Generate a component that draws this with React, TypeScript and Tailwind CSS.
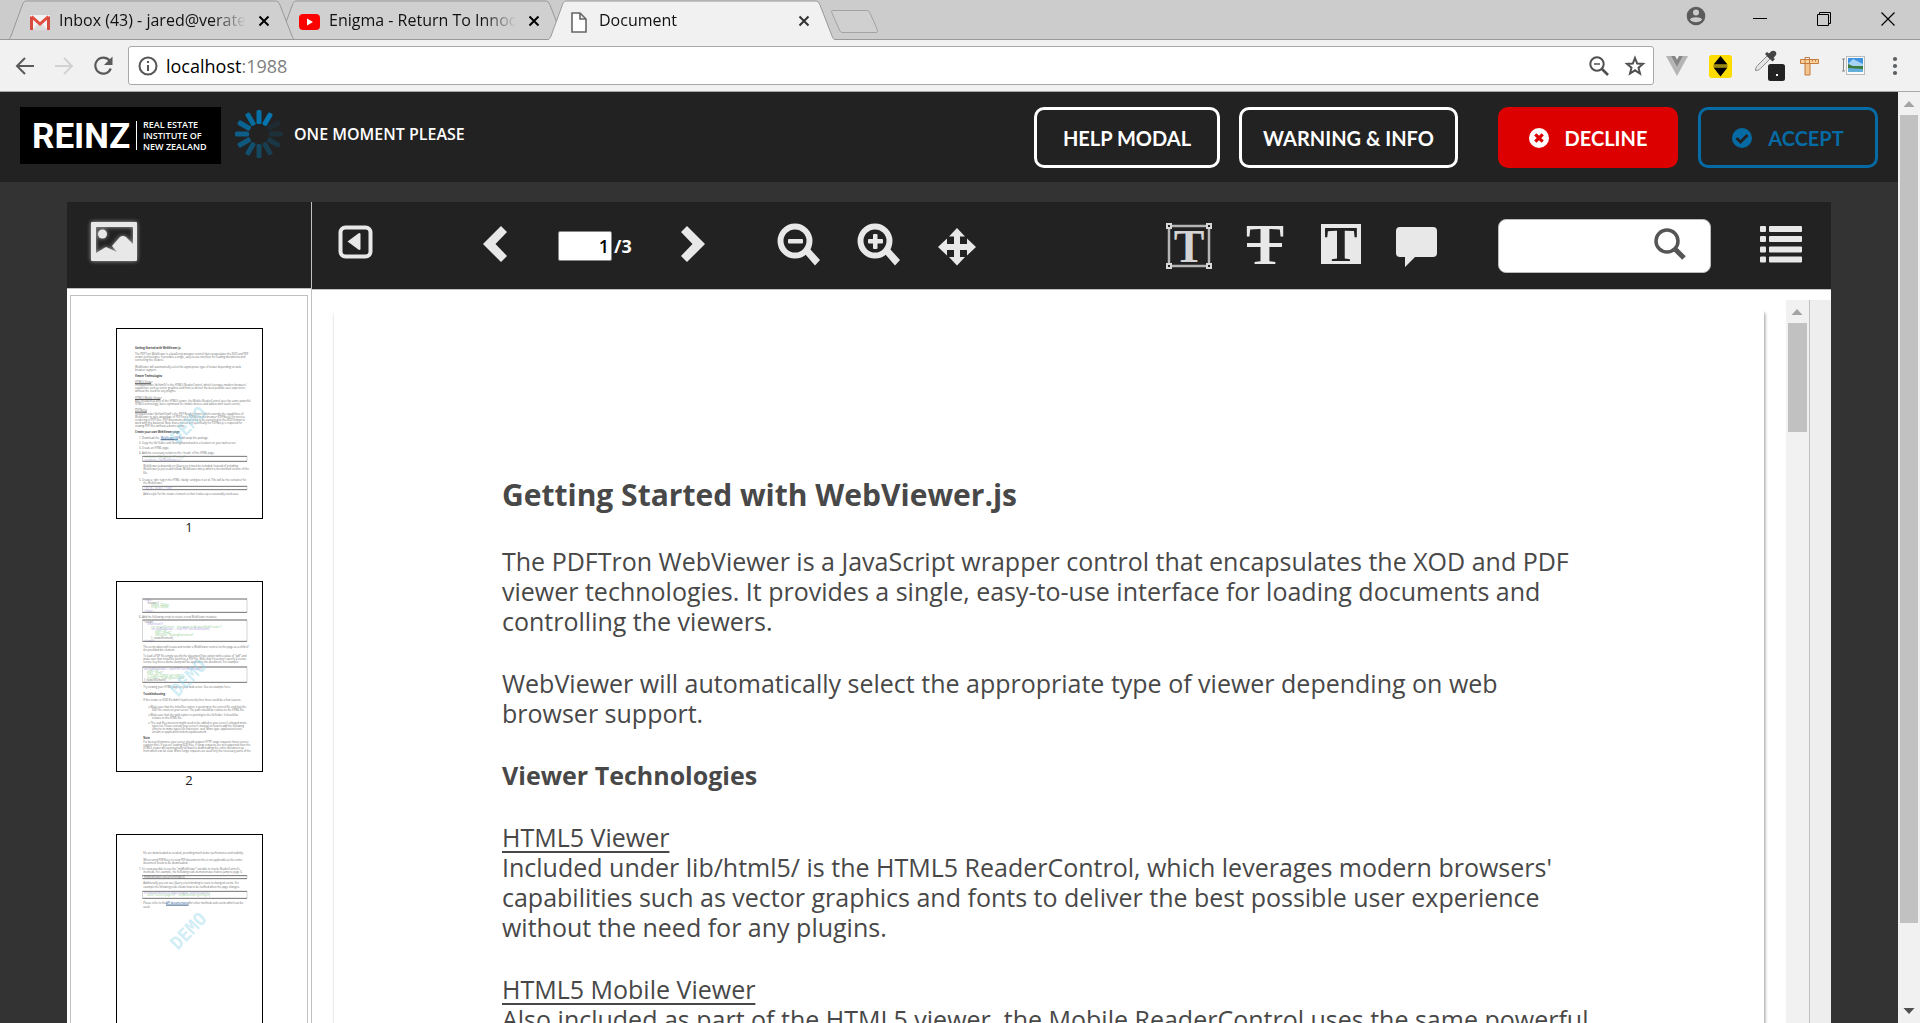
import React from "react";

function TabShape({ active }: { active?: boolean }) {
  return (
    <svg className="absolute inset-0" width="287" height="40" viewBox="0 0 287 40" aria-hidden="true">
      <path
        d="M0.5 39.5 C2 38.5 2 38 3 36 L14 6 C15.5 2 16 1 19 1 L267 1 C270 1 270.500 2 272 5 L284 36 C285 38 285 39 286.500 39.500 Z"
        fill={active ? "#f1f1f1" : "#d0d0d0"}
        stroke="#999"
        strokeWidth="1"
      />
      {active ? <rect x="1" y="39" width="285" height="1" fill="#f1f1f1" /> : <rect x="0" y="39" width="287" height="1" fill="#999" />}
    </svg>
  );
}

function GmailIcon() {
  return (
    <svg width="22" height="18" viewBox="0 0 22 18" aria-hidden="true">
      <rect x="1" y="2" width="20" height="15" rx="1" fill="#f2f2f2" />
      <path d="M3 17 L11 9 L19 17 Z" fill="#dcdcdc" />
      <path d="M1 17 V3 L4 5.500 V17 Z M21 17 V3 L18 5.500 V17 Z" fill="#d54b3d" />
      <path d="M2.500 3.500 L11 11 L19.500 3.500" fill="none" stroke="#e04a3f" strokeWidth="3" />
    </svg>
  );
}

function YoutubeIcon() {
  return (
    <svg width="22" height="18" viewBox="0 0 22 18" aria-hidden="true">
      <rect x="0" y="1" width="21" height="16" rx="4" fill="#f00" />
      <path d="M8 5.500 L14 9 L8 12.500 Z" fill="#fff" />
    </svg>
  );
}

function FileIcon() {
  return (
    <svg width="22" height="22" viewBox="0 0 22 22" aria-hidden="true">
      <path d="M3 2 H11 L17 8 V21 H3 Z M11 2 V8 H17" fill="#fff" stroke="#666" strokeWidth="1.600" />
    </svg>
  );
}

function Tab({ title, icon, active }: { title: string; icon: React.ReactNode; active?: boolean }) {
  return (
    <div className={active ? "relative z-20 -ml-4 h-10 w-[286px] shrink-0" : "relative z-10 -ml-4 h-10 w-[286px] shrink-0 first:z-[11] first:ml-0"}>
      <TabShape active={active} />
      <div className="relative flex h-full items-center pr-[22px] pl-[21px]">
        <button className="flex min-w-0 flex-1 items-center gap-2 text-left">
          <span className="flex w-[22px] shrink-0 justify-center pt-1">{icon}</span>
          <span className="min-w-0 flex-1 overflow-hidden text-[16px] leading-6 whitespace-nowrap text-[#111] [mask-image:linear-gradient(to_right,black_82%,transparent)]">
            {title}
          </span>
        </button>
        <button aria-label={"Close " + title} className="ml-2.5 flex size-4 items-center justify-center pt-0.5">
          <svg width="12" height="12" viewBox="0 0 12 12" aria-hidden="true">
            <path d="M1.500 1.500 L10.500 10.500 M10.500 1.500 L1.500 10.500" stroke={active ? "#333" : "#000"} strokeWidth="2" />
          </svg>
        </button>
      </div>
    </div>
  );
}

function TabStrip() {
  return (
    <div className="relative flex h-10 shrink-0 bg-[#ccc] pl-2">
      <div className="absolute inset-x-0 bottom-0 h-px bg-[#999]" />
      <div className="relative flex">
        <Tab title="Inbox (43) - jared@veratech.co.nz" icon={<GmailIcon />} />
        <Tab title="Enigma - Return To Innocence" icon={<YoutubeIcon />} />
        <Tab title="Document" icon={<FileIcon />} active />
      </div>
      <button aria-label="New tab" className="-ml-1 flex pt-[9px]">
        <svg width="50" height="25" viewBox="0 0 50 25" aria-hidden="true">
          <path d="M3 1.500 H36 C38 1.500 39 2 40 4 L47 20 C48 22.500 47.500 23.500 46 23.500 H13 C11 23.500 10.500 23 9.500 21 L2 4 C1 2 1.500 1.500 3 1.500 Z" fill="#d0d0d0" stroke="#a3a3a3" />
        </svg>
      </button>
      <div className="relative ml-auto flex items-start">
        <button aria-label="Profile" className="mr-[46px] pt-1.5">
          <svg width="20" height="20" viewBox="0 0 20 20" aria-hidden="true">
            <circle cx="10" cy="10" r="9.300" fill="#5c5c5c" />
            <circle cx="10" cy="6.500" r="3" fill="#ccc" />
            <path d="M4 13.500 C5 10.500 15 10.500 16 13.500 C14 17 6 17 4 13.500 Z" fill="#ccc" />
          </svg>
        </button>
        <button aria-label="Minimize" className="pt-[11px]">
          <svg width="16" height="16" viewBox="0 0 16 16" aria-hidden="true"><path d="M1 7.500 H15" stroke="#000" /></svg>
        </button>
        <button aria-label="Restore" className="ml-12 pt-[11px]">
          <svg width="16" height="16" viewBox="0 0 16 16" aria-hidden="true"><path d="M1.500 3.500 H12.500 V14.500 H1.500 Z M3.500 3.500 V1.500 H14.500 V12.500 H12.500" fill="none" stroke="#000" /></svg>
        </button>
        <button aria-label="Close window" className="mr-6 ml-12 pt-[11px]">
          <svg width="16" height="16" viewBox="0 0 16 16" aria-hidden="true"><path d="M1.500 1.500 L14.500 14.500 M14.500 1.500 L1.500 14.500" stroke="#000" strokeWidth="1.200" /></svg>
        </button>
      </div>
    </div>
  );
}

function AddressBar() {
  return (
    <div className="flex h-[52px] shrink-0 items-center border-b border-[#a9a9a9] bg-[#f1f1f1] pr-[14px] pl-[14px]">
      <button aria-label="Back" className="mr-[17px]">
        <svg width="22" height="22" viewBox="0 0 22 22" fill="none" stroke="#5a5a5a" strokeWidth="2" aria-hidden="true"><path d="M20 11 H3 M11 3 L3 11 L11 19" /></svg>
      </button>
      <button aria-label="Forward" className="mr-[17px]">
        <svg width="22" height="22" viewBox="0 0 22 22" fill="none" stroke="#d2d2d2" strokeWidth="2" aria-hidden="true"><path d="M2 11 H19 M11 3 L19 11 L11 19" /></svg>
      </button>
      <button aria-label="Reload" className="mr-[14px]">
        <svg width="22" height="22" viewBox="0 0 22 22" aria-hidden="true">
          <path d="M17.500 5.500 A8 8 0 1 0 18.800 13.500" fill="none" stroke="#5a5a5a" strokeWidth="2.200" />
          <path d="M20.500 1.500 V10 H12 Z" fill="#5a5a5a" />
        </svg>
      </button>
      <div className="flex h-[39px] min-w-0 flex-1 items-center rounded-[3px] border border-[#a8a8a8] bg-white pr-[7px] pl-[9px]">
        <svg width="20" height="20" viewBox="0 0 20 20" className="shrink-0" aria-hidden="true">
          <circle cx="10" cy="10" r="8.500" fill="none" stroke="#555" strokeWidth="2" />
          <path d="M10 9 V15 M10 5 V7" stroke="#555" strokeWidth="2" />
        </svg>
        <div className="ml-2 flex-1 text-[18px] leading-6 text-black">
          localhost<span className="text-[#808080]">:1988</span>
        </div>
        <button aria-label="Zoom" className="mr-[14px]">
          <svg width="22" height="22" viewBox="0 0 22 22" fill="none" stroke="#505050" strokeWidth="2" aria-hidden="true">
            <circle cx="9" cy="9" r="6.700" /><path d="M14 14 L20 20" strokeWidth="2.600" /><path d="M6 9 H12" strokeWidth="1.500" />
          </svg>
        </button>
        <button aria-label="Bookmark this page">
          <svg width="22" height="22" viewBox="0 0 22 22" fill="none" stroke="#505050" strokeWidth="2" aria-hidden="true">
            <path d="M11 3 L13.200 8.500 L19 8.900 L14.500 12.700 L16 18.500 L11 15.300 L6 18.500 L7.500 12.700 L3 8.900 L8.800 8.500 Z" />
          </svg>
        </button>
      </div>
      <div className="flex items-center">
        <button aria-label="Vue devtools" className="ml-[11px]">
          <svg width="24" height="24" viewBox="0 0 24 24" aria-hidden="true">
            <path d="M1 2 H6 L12 13 L18 2 H23 L12 22 Z" fill="#b5b5b5" /><path d="M6 2 H10 L12 5.500 L14 2 H18 L12 13 Z" fill="#868686" />
          </svg>
        </button>
        <button aria-label="Page ruler extension" className="ml-[19px]">
          <svg width="24" height="24" viewBox="0 0 24 24" aria-hidden="true">
            <rect x="1" y="1" width="23" height="23" rx="3" fill="#ffdc00" /><path d="M12.500 2 L19.500 10.500 H5.500 Z M5.500 13.500 H19.500 L12.500 22.500 Z" fill="#000" /><path d="M5.500 12 H19.500" stroke="#333" strokeWidth="1" />
          </svg>
        </button>
        <button aria-label="Eye dropper" className="ml-[22px]">
          <svg width="32" height="32" viewBox="0 0 32 32" aria-hidden="true">
            <path d="M1.500 20.500 C1.500 17 3 16 5 14 L13 6 L16 9 L8 17 C6 19 5 20.500 1.500 20.500 Z" fill="#e4e4e4" stroke="#8c8c8c" />
            <path d="M11 4 L13 2 L15 3.500 L17 1.500 C20 -0.500 23.500 2 22 5 L19.500 8 L21 9 L18.500 11.500 Z" fill="#444" />
            <rect x="14" y="14" width="17" height="17" rx="2.500" fill="#222" /><rect x="22" y="24" width="2" height="2" fill="#fff" />
          </svg>
        </button>
        <button aria-label="Measure" className="ml-[13px]">
          <svg width="22" height="22" viewBox="0 0 22 22" aria-hidden="true">
            <path d="M6 6 H11 V20 H6 Z" fill="#f5c48d" stroke="#c27b41" /><path d="M1.500 4.500 H19.500 V8.500 H1.500 Z" fill="#f9cf9a" stroke="#c27b41" />
            <path d="M6 2.500 V8.500 M10.500 2.500 V8.500 M13.500 4.500 V6.500 M16.500 4.500 V6.500 M6 2.500 H10.500" stroke="#c27b41" fill="none" />
          </svg>
        </button>
        <button aria-label="Image size" className="ml-5">
          <svg width="24" height="22" viewBox="0 0 24 22" aria-hidden="true">
            <path d="M1 4 H4 M1 16 H4 M2.500 4 V16" stroke="#888" fill="none" />
            <rect x="5.500" y="1.500" width="18" height="18" fill="#fafafa" stroke="#bbb" />
            <rect x="7" y="3" width="15" height="14" fill="#3e92de" /><path d="M7 9 L12 4 L22 9 V12 H7 Z" fill="#a4d3f5" /><path d="M7 9 L12 11 L22 11 V14 H7 Z" fill="#3e7a3e" /><path d="M7 13 L22 14 V17 H7 Z" fill="#63aedb" />
          </svg>
        </button>
        <button aria-label="Menu" className="ml-[19px]">
          <svg width="22" height="22" viewBox="0 0 22 22" fill="#5a5f63" aria-hidden="true"><circle cx="11" cy="4" r="2.100" /><circle cx="11" cy="11" r="2.100" /><circle cx="11" cy="18" r="2.100" /></svg>
        </button>
      </div>
    </div>
  );
}

function Logo() {
  return (
    <svg width="201" height="57" viewBox="0 0 201 57" role="img" aria-label="REINZ Real Estate Institute of New Zealand">
      <rect width="201" height="57" fill="#000" />
      <text x="12" y="41" fill="#fff" fontSize="35" fontWeight="700" fontFamily="'Liberation Sans Narrow', Roboto, sans-serif">REINZ</text>
      <rect x="116" y="14" width="1" height="29" fill="#fff" />
      <g fill="#fff" fontSize="9" fontWeight="600" fontFamily="'Open Sans', 'Noto Sans', sans-serif">
        <text x="123" y="21">REAL ESTATE</text>
        <text x="123" y="32">INSTITUTE OF</text>
        <text x="123" y="43">NEW ZEALAND</text>
      </g>
    </svg>
  );
}

const spokes = [1, 0.95, 0.88, 0.8, 0.72, 0.64, 0.54, 0.44, 0.34, 0.25, 0.17, 0.12];

function Spinner() {
  return (
    <svg width="50" height="50" viewBox="-25 -25 50 50" aria-hidden="true">
      {spokes.map((o, i) => (
        <rect key={i} x="-2.500" y="-24" width="5" height="14" rx="1.500" fill="#0576b0" opacity={o} transform={`rotate(${30 - i * 30})`} />
      ))}
    </svg>
  );
}

const headerButton = "flex h-[61px] items-center justify-center rounded-[10px] border-[3px] font-['Lato',sans-serif] text-[20px] leading-6 font-bold whitespace-nowrap";

function Header() {
  return (
    <header className="flex h-[90px] shrink-0 items-start bg-[#222] px-5 pt-[15px]">
      <Logo />
      <div className="ml-[13px] flex items-center pt-0.5">
        <Spinner />
        <span className="ml-[10px] text-[16px] leading-5 font-semibold text-white">ONE MOMENT PLEASE</span>
      </div>
      <div className="ml-auto flex">
        <button className={headerButton + " w-[186px] border-white text-white"}>HELP MODAL</button>
        <button className={headerButton + " ml-[19px] w-[219px] border-white text-white"}>WARNING &amp; INFO</button>
        <button className={headerButton + " ml-10 w-[180px] gap-4 border-[#dd0000] bg-[#dd0000] text-white"}>
          <svg width="20" height="20" viewBox="0 0 20 20" aria-hidden="true"><circle cx="10" cy="10" r="10" fill="#fff" /><path d="M6.300 6.300 L13.700 13.700 M13.700 6.300 L6.300 13.700" stroke="#dd0000" strokeWidth="3.200" /></svg>
          DECLINE
        </button>
        <button className={headerButton + " ml-5 w-[180px] gap-4 border-[#066ba4] text-[#066ba4]"}>
          <svg width="20" height="20" viewBox="0 0 20 20" aria-hidden="true"><circle cx="10" cy="10" r="10" fill="#066ba4" /><path d="M4.500 10 L8.500 14 L15.500 7" fill="none" stroke="#222" strokeWidth="3" /></svg>
          ACCEPT
        </button>
      </div>
    </header>
  );
}

type Line = [number, number, string, string?];

function Thumb({ lines, boxes, label }: { lines: Line[]; boxes: [number, number][]; label: string }) {
  return (
    <li className="mb-[46px] flex flex-col items-center">
      <button aria-label={"Go to page " + label} className="border border-black bg-white">
        <svg width="145" height="189" viewBox="3 3 435 567" className="block" aria-hidden="true">
          <g fontFamily="'Open Sans', 'Noto Sans', sans-serif" fontSize="8" fill="#666">
            {lines.map(([x, y, text, kind], i) => (
              <text
                key={i}
                x={x}
                y={y}
                fontWeight={kind === "b" ? 700 : 400}
                fill={kind === "g" ? "#8fcf8f" : kind === "p" ? "#a795dd" : kind === "l" ? "#0b4a8f" : kind === "b" ? "#444" : undefined}
              >
                {text}
              </text>
            ))}
            {lines.map(([x, y, text, kind], i) =>
              kind === "u" || kind === "l" ? <rect key={i} x={x} y={y + 1} width={text.length * 4} height="2.500" fill={kind === "l" ? "#0b3a6f" : "#333"} /> : null,
            )}
          </g>
          {boxes.map(([y, h], i) => (
            <g key={i}>
              <rect x="80" y={y} width="313" height={h} fill="none" stroke="#aaa" strokeWidth="1.500" />
              <path d={`M80 ${y} h313 M80 ${y + h} h313`} stroke="#666" strokeWidth="2.500" />
            </g>
          ))}
          <text x="217" y="290" transform="rotate(-46 217 290)" textAnchor="middle" dominantBaseline="central" fontFamily="'DejaVu Sans Mono', monospace" fontWeight="700" fontSize="54" fill="#8fd3e8" opacity="0.400">
            DEMO
          </text>
        </svg>
      </button>
      <span className="pt-px text-[13px] leading-[15px] text-[#222]">{label}</span>
    </li>
  );
}

const page1: Line[] = [
  [57, 62, "Getting Started with WebViewer.js", "b"],
  [57, 82, "The PDFTron WebViewer is a JavaScript wrapper control that encapsulates the XOD and PDF"],
  [57, 91, "viewer technologies. It provides a single, easy-to-use interface for loading documents and"],
  [57, 100, "controlling the viewers."],
  [57, 119, "WebViewer will automatically select the appropriate type of viewer depending on web"],
  [57, 128, "browser support."],
  [57, 147, "Viewer Technologies", "b"],
  [57, 165, "HTML5 Viewer", "u"],
  [57, 175, "Included under lib/html5/ is the HTML5 ReaderControl, which leverages modern browsers'"],
  [57, 184, "capabilities such as vector graphics and fonts to deliver the best possible user experience"],
  [57, 193, "without the need for any plugins."],
  [57, 212, "HTML5 Mobile Viewer", "u"],
  [57, 222, "Also included as part of the HTML5 viewer, the Mobile ReaderControl uses the same powerful"],
  [57, 231, "HTML5 technology, but is optimized for mobile devices and tablets with touch events."],
  [57, 250, "PDFNet.js", "u"],
  [57, 260, "Included under lib/html5/pdf is the PDF ReaderControl which extends the capabilities of"],
  [57, 269, "WebViewer to take advantage of PDFTron's PDFNet in the browser (PDFNet.js) for precise"],
  [57, 278, "rendering of PDF files. PDF documents do not need to be converted to the XOD format to"],
  [57, 287, "work with this backend. Note that a license key specifically for PDFNet.js is required for"],
  [57, 296, "viewing PDF files without a demo stamp."],
  [57, 315, "Create your own WebViewer page", "b"],
  [69, 333, "1.  Download the"],
  [134, 333, "WebViewer SDK", "l"],
  [192, 333, "and unzip the package."],
  [69, 348, "2.  Copy the lib/ folder and GettingStarted.xod to a location on your web server."],
  [69, 362, "3.  Create an HTML page."],
  [69, 377, "4.  Add the necessary scripts to the <head> of the HTML page."],
  [84, 391, "<script src=\"lib/jquery-1.7.min.js\">", "g"],
  [84, 398, "<script src=\"lib/WebViewer.js\">", "p"],
  [82, 418, "WebViewer.js depends on jQuery so it must be included. Instead of including"],
  [82, 427, "WebViewer.js you could include WebViewer.min.js which is the minified version of the"],
  [82, 437, "file."],
  [69, 458, "5.  Create a <div> tag in the HTML <body> and give it an id. This will be the container for"],
  [82, 467, "the WebViewer."],
  [84, 483, "<div id=\"viewer\"></div>", "p"],
  [82, 502, "Add a style for the viewer element so that it takes up a reasonably sized area."],
];

const page2: Line[] = [
  [84, 61, "<style>", "p"],
  [94, 68, "#viewer {"],
  [106, 75, "width: 1024px;", "g"],
  [106, 81, "height: 600px;", "g"],
  [84, 93, "</style>", "p"],
  [69, 111, "6.  Add the following script to create a new WebViewer instance."],
  [84, 127, "<script>"],
  [94, 133, "$(function() {", "p"],
  [106, 140, "var viewerElement = document.getElementById(\"viewer\");", "g"],
  [106, 147, "var myWebViewer = new PDFTron.WebViewer({", "p"],
  [118, 154, "path: \"lib\",", "g"],
  [118, 160, "type: \"html5\",", "g"],
  [118, 166, "initialDoc: \"GettingStarted.xod\"", "g"],
  [106, 173, "}, viewerElement);"],
  [84, 183, "</script>", "p"],
  [82, 200, "The script above will create and render a WebViewer control on the page as a child of"],
  [82, 209, "the provided div element."],
  [82, 229, "To load a PDF file simply specify the documentType option with a value of \"pdf\" and"],
  [82, 238, "make sure that initialDoc points to a PDF file. Note that if you don't specify a license"],
  [82, 247, "license key then a demo stamp will be applied to the document. For example:"],
  [84, 267, "var myWebViewer = new PDFTron.WebViewer({", "p"],
  [94, 274, "path: \"lib\",", "g"],
  [94, 280, "type: \"html5\",", "g"],
  [94, 287, "l: \"YOUR LICENSE KEY HERE\",", "g"],
  [94, 294, "initialDoc: \"GettingStarted.pdf\"", "g"],
  [84, 301, "}, viewerElement);"],
  [82, 321, "Try viewing your HTML page on your web server. See an example here."],
  [82, 342, "Troubleshooting", "b"],
  [82, 361, "If the viewer or XOD file didn't load correctly then there could be a few reasons."],
  [97, 382, "o   Make sure that the initialDoc option is pointing to the correct file and that the"],
  [108, 391, "XOD file exists on your server. The path should be relative to the HTML file."],
  [97, 406, "o   Make sure that the path option is pointing to the lib folder. It should be"],
  [108, 415, "relative to the HTML file."],
  [97, 430, "o   The .xod file extension might need to be added to your server's allowed mime"],
  [108, 439, "types list. Please consult your server's manual on how to add the following"],
  [108, 448, "entry to its mime types list: Extension: .xod, Mime type: application/octet-"],
  [108, 457, "stream or application/vnd.ms-xpsdocument."],
  [82, 475, "Note", "b"],
  [82, 485, "For best performance your server should support HTTP range requests (most servers"],
  [82, 494, "support this). If you are loading XOD files, if range requests are not supported then the"],
  [82, 503, "HTML5 viewer will automatically fall back to downloading the entire document up"],
  [82, 512, "front which can be slow. When range requests are used only the necessary parts of the"],
];

const page3: Line[] = [
  [82, 61, "file are downloaded as needed, providing much better performance and stability."],
  [82, 80, "When using PDFNet.js to view PDF documents this is not applicable as the entire"],
  [82, 89, "document needs to be downloaded."],
  [69, 107, "7.  It is now possible to use the \"myWebViewer\" variable to invoke ReaderControl's"],
  [82, 117, "methods. For example, the following code demonstrates how to jump to page 3."],
  [84, 132, "myWebViewer.setCurrentPage(3);"],
  [82, 151, "Additionally you can use jQuery event binding to react to changed events. For"],
  [82, 161, "example the following code shows how to be notified when the page changes."],
  [84, 179, "$(viewerElement).on('pageChanged', function(event) {", "p"],
  [94, 186, "alert(\"Current page is: \" + myWebViewer.getPage());", "g"],
  [82, 211, "Please refer to the"],
  [150, 211, "API documentation", "l"],
  [220, 211, "for other methods and events which can be"],
  [82, 221, "used."],
];

function Sidebar() {
  return (
    <aside className="flex w-[245px] shrink-0 flex-col border-r border-[#c0c0c0] bg-white">
      <div className="flex h-[87px] shrink-0 border-b border-[#c0c0c0] bg-[#222] pt-[17px] pl-5">
        <button aria-label="Thumbnails" className="h-[46px] drop-shadow-[0_0_2px_#aaa]">
          <svg width="54" height="46" viewBox="0 0 54 46" aria-hidden="true">
            <path fillRule="evenodd" d="M5 3 H49 Q50 3 50 4 V41 Q50 42 49 42 H5 Q4 42 4 41 V4 Q4 3 5 3 Z M9 8 V34 L19 28 L30 33 L25 27 L33 18 Q36 16 39 18 L46 25 V8 Z" fill="#e8e8e8" />
            <circle cx="15.500" cy="15" r="4.500" fill="#e8e8e8" />
          </svg>
        </button>
      </div>
      <ul className="mx-[3px] mt-1.5 min-h-0 flex-1 overflow-hidden border border-b-0 border-[#c0c0c0] pt-8">
        <Thumb label="1" lines={page1} boxes={[[385, 15], [475, 10]]} />
        <Thumb label="2" lines={page2} boxes={[[54, 40], [117, 64], [258, 46]]} />
        <Thumb label="3" lines={page3} boxes={[[125, 9], [172, 21]]} />
      </ul>
    </aside>
  );
}

function Tool({ label, children, className }: { label: string; children: React.ReactNode; className?: string }) {
  return (
    <button aria-label={label} className={className}>
      <svg width="46" height="46" viewBox="0 0 46 46" fill="#e8e8e8" className="block" aria-hidden="true">{children}</svg>
    </button>
  );
}

function Toolbar() {
  return (
    <div className="flex h-[88px] shrink-0 items-center border-b border-[#c0c0c0] bg-[#222]">
      <Tool label="Toggle sidebar" className="ml-5 pb-2">
        <rect x="8.500" y="8.500" width="30" height="29" rx="5" fill="none" stroke="#e8e8e8" strokeWidth="4" />
        <path d="M15.500 22.500 L27 14 Q28.500 14 28.500 15 V30 Q28.500 31 27 31 Z" />
      </Tool>
      <Tool label="Previous page" className="ml-[101px]">
        <path d="M22 3 L28 9 L16.500 21 L28 33 L22 39 L4 21 Z" />
      </Tool>
      <label className="ml-[33px] flex items-center gap-0.5 text-[18px] leading-6 font-bold text-white">
        <input aria-label="Page number" defaultValue="1" className="h-[30px] w-[54px] rounded-[2px] border border-[#888] bg-white pr-0.5 text-right text-[18px] font-semibold text-black" />
        /3
      </label>
      <Tool label="Next page" className="ml-7">
        <path d="M27 3 L21 9 L32.500 21 L21 33 L27 39 L45 21 Z" />
      </Tool>
      <Tool label="Zoom out" className="ml-[70px]">
        <circle cx="19" cy="18" r="14.500" fill="none" stroke="#e8e8e8" strokeWidth="6" />
        <path d="M29 31 L34 26 L44 37 L39 42.500 Z" /><rect x="12" y="16" width="15" height="4.500" rx="1" />
      </Tool>
      <Tool label="Zoom in" className="ml-[34px]">
        <circle cx="19" cy="18" r="14.500" fill="none" stroke="#e8e8e8" strokeWidth="6" />
        <path d="M29 31 L34 26 L44 37 L39 42.500 Z" /><rect x="12" y="16" width="15" height="4.500" rx="1" /><rect x="17" y="11" width="4.500" height="15" rx="1" />
      </Tool>
      <Tool label="Pan" className="ml-8">
        <path d="M23 5 L31 13.500 H26 V21 H33 V15.500 L42 24 L33 32.500 V27 H26 V34 H31 L23 42.500 L15 34 H20 V27 H13 V32.500 L4 24 L13 15.500 V21 H20 V13.500 H15 Z" />
      </Tool>
      <div className="ml-auto flex items-center gap-[30px]">
        <Tool label="Select text">
          <path d="M3 3 H43 V43 H3 Z" fill="none" stroke="#b5b5b5" strokeWidth="2.500" />
          <text x="23" y="39" textAnchor="middle" fontFamily="'Liberation Serif', serif" fontWeight="700" fontSize="46" fill="#d4d4d4">T</text>
          <g stroke="#d8d8d8" strokeWidth="2" fill="#222"><rect x="1" y="1" width="4" height="4" /><rect x="41" y="1" width="4" height="4" /><rect x="1" y="41" width="4" height="4" /><rect x="41" y="41" width="4" height="4" /></g>
        </Tool>
        <Tool label="Strike out">
          <text x="23" y="41" textAnchor="middle" fontFamily="'Liberation Serif', serif" fontWeight="700" fontSize="57">T</text>
          <rect x="5" y="20" width="35" height="4" />
        </Tool>
        <Tool label="Highlight">
          <rect x="3" y="1" width="40" height="40" />
          <text x="23" y="38" textAnchor="middle" fontFamily="'Liberation Serif', serif" fontWeight="700" fontSize="50" fill="#222">T</text>
        </Tool>
        <Tool label="Comment">
          <path d="M6 4 H39 Q43 4 43 8 V30 Q43 34 39 34 H21 L11 44 V34 H6 Q2 34 2 30 V8 Q2 4 6 4 Z" />
        </Tool>
      </div>
      <div className="ml-[58px] flex h-[54px] w-[213px] items-center rounded-lg border border-[#bbb] bg-white pr-[22px]">
        <input aria-label="Search" className="h-full min-w-0 flex-1 bg-transparent px-3 text-[18px] text-black outline-none" />
        <button aria-label="Find" className="pb-0.5">
          <svg width="36" height="36" viewBox="0 0 36 36" fill="none" stroke="#555" aria-hidden="true"><circle cx="15" cy="14" r="11" strokeWidth="3.500" /><path d="M22 21 L32 31" strokeWidth="5" /></svg>
        </button>
      </div>
      <Tool label="Side menu" className="mr-[26px] ml-12 pb-0.5">
        {[4, 14, 24.5, 34.5].map((y) => (
          <g key={y}><rect x="1" y={y} width="6" height="6" rx="1" /><rect x="10" y={y} width="33" height="6" rx="1" /></g>
        ))}
      </Tool>
    </div>
  );
}

function DocumentPage() {
  return (
    <article className="mx-[22px] mt-5 min-w-0 flex-1 overflow-hidden bg-white pt-[166px] pl-[168px] text-[25px] leading-[30px] whitespace-nowrap text-[#484848] shadow-[1px_3px_3px_rgba(0,0,0,0.4)]">
      <h1 className="mb-8 text-[30px] leading-[38px] font-bold">Getting Started with WebViewer.js</h1>
      <p className="mb-8">
        The PDFTron WebViewer is a JavaScript wrapper control that encapsulates the XOD and PDF<br />
        viewer technologies. It provides a single, easy-to-use interface for loading documents and<br />
        controlling the viewers.
      </p>
      <p className="mb-8">
        WebViewer will automatically select the appropriate type of viewer depending on web<br />
        browser support.
      </p>
      <h2 className="mb-8 font-bold">Viewer Technologies</h2>
      <h3 className="underline decoration-2 underline-offset-4">HTML5 Viewer</h3>
      <p className="mb-8">
        Included under lib/html5/ is the HTML5 ReaderControl, which leverages modern browsers'<br />
        capabilities such as vector graphics and fonts to deliver the best possible user experience<br />
        without the need for any plugins.
      </p>
      <h3 className="underline decoration-2 underline-offset-4">HTML5 Mobile Viewer</h3>
      <p>Also included as part of the HTML5 viewer, the Mobile ReaderControl uses the same powerful</p>
    </article>
  );
}

function ArrowUp() {
  return <svg width="22" height="23" viewBox="0 0 22 23" aria-hidden="true"><path d="M5.500 15 L11 9 L16.500 15 Z" fill="#a3a3a3" /></svg>;
}

export default function App() {
  return (
    <div className="flex h-screen flex-col overflow-hidden bg-[#333] font-['Open_Sans','Noto_Sans',sans-serif]">
      <TabStrip />
      <AddressBar />
      <div className="flex min-h-0 flex-1">
        <div className="flex min-w-0 flex-1 flex-col">
          <Header />
          <main className="mx-[67px] mt-5 flex min-h-0 flex-1 bg-white">
            <Sidebar />
            <section className="flex min-w-0 flex-1 flex-col">
              <Toolbar />
              <div className="flex min-h-0 flex-1">
                <DocumentPage />
                <div className="mt-2.5 flex w-[45px] shrink-0 bg-[#eee]">
                  <div className="w-[24px] border-r border-[#c0c0c0] bg-[#f1f1f1]">
                    <ArrowUp />
                    <div className="mx-0.5 h-[109px] bg-[#c1c1c1]" />
                  </div>
                </div>
              </div>
            </section>
          </main>
        </div>
        <div className="flex w-[22px] shrink-0 flex-col bg-[#f1f1f1]">
          <ArrowUp />
          <div className="mx-0.5 h-[808px] bg-[#c1c1c1]" />
          <svg className="mt-auto" width="22" height="23" viewBox="0 0 22 23" aria-hidden="true"><path d="M5.500 8 L11 14 L16.500 8 Z" fill="#505050" /></svg>
        </div>
      </div>
    </div>
  );
}
